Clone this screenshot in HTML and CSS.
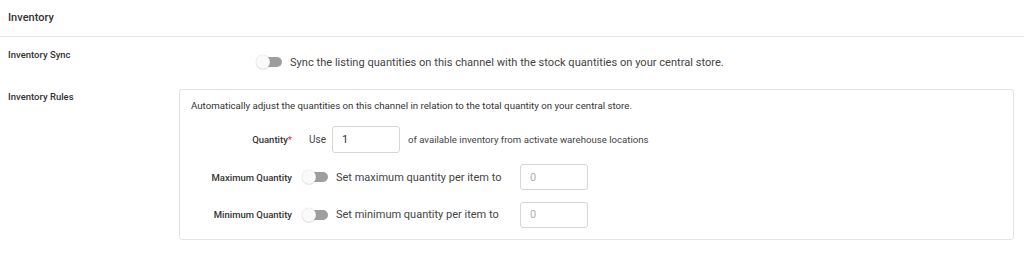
FILE: index.html
```html
<!DOCTYPE html>
<html lang="en">
<head>
  <meta charset="UTF-8">
  <meta name="viewport" content="width=device-width, initial-scale=1.0">
  <title>Inventory</title>
  <link rel="stylesheet" href="styles.css">
</head>
<body>
  <div class="panel">
    <div class="panel-header">Inventory</div>

    <div class="field">
      <div class="field-label">Inventory Sync</div>
      <div class="field-body sync">
        <span class="toggle"><span class="knob"></span></span>
        <span class="sync-text">Sync the listing quantities on this channel with the stock quantities on your central store.</span>
      </div>
    </div>

    <div class="field">
      <div class="field-label">Inventory Rules</div>
      <div class="rules-box">
        <p class="rules-desc">Automatically adjust the quantities on this channel in relation to the total quantity on your central store.</p>
        <div class="rule-row">
          <div class="rule-label">Quantity<span class="req">*</span></div>
          <div class="rule-body">
            <span class="use">Use</span>
            <input class="num-input qty" type="text" value="1">
            <span class="small-text">of available inventory from activate warehouse locations</span>
          </div>
        </div>
        <div class="rule-row">
          <div class="rule-label">Maximum Quantity</div>
          <div class="rule-body">
            <span class="toggle"><span class="knob"></span></span>
            <span class="set-text">Set maximum quantity per item to</span>
            <input class="num-input limit" type="text" placeholder="0">
          </div>
        </div>
        <div class="rule-row">
          <div class="rule-label">Minimum Quantity</div>
          <div class="rule-body">
            <span class="toggle"><span class="knob"></span></span>
            <span class="set-text">Set minimum quantity per item to</span>
            <input class="num-input limit" type="text" placeholder="0">
          </div>
        </div>
      </div>
    </div>
  </div>
</body>
</html>
```

FILE: styles.css
```css
html, body {
  margin: 0;
  padding: 0;
  background: white;
  font-family: Roboto, "Liberation Sans", sans-serif;
  color: #333;
}
.panel {
  width: 1024px;
}
.panel-header {
  height: 36px;
  line-height: 36px;
  padding-left: 8px;
  font-size: 11px;
  font-weight: 500;
  color: #333;
  border-bottom: 1px solid #e6e6e6;
}
.field {
  display: flex;
  padding-top: 11px;
}
.field-label {
  width: 171px;
  padding-left: 8px;
  font-size: 9.5px;
  font-weight: 500;
  color: #333;
  line-height: 14px;
  flex-shrink: 0;
}
.field-body.sync {
  display: flex;
  align-items: center;
  height: 26px;
  margin-top: 1px;
  padding-left: 77px;
  padding-bottom: 4px;
}
.toggle {
  position: relative;
  display: inline-block;
  width: 26px;
  height: 14px;
  flex-shrink: 0;
}
.toggle::before {
  content: "";
  position: absolute;
  left: 3px;
  right: 0;
  top: 2px;
  height: 10px;
  border-radius: 5px;
  background: #9e9e9e;
}
.knob {
  position: absolute;
  left: 0;
  top: 0;
  width: 14px;
  height: 14px;
  border-radius: 50%;
  background: #fafafa;
  box-shadow: 0 0 1px rgba(0, 0, 0, 0.25), 0 1px 1px rgba(0, 0, 0, 0.08);
}
.sync-text {
  margin-left: 8px;
  font-size: 11.1px;
  color: #444;
}
.rules-box {
  width: 835px;
  height: 151px;
  border: 1px solid #e3e3e3;
  border-radius: 3px;
  margin-top: -1px;
  box-sizing: border-box;
  padding: 9px 11px;
}
.rules-desc {
  margin: 0 0 13px;
  font-size: 9.7px;
  line-height: 14px;
  color: #333;
}
.rule-row {
  display: flex;
  align-items: center;
  height: 27px;
  margin-bottom: 10.5px;
}
.rule-label {
  width: 101px;
  text-align: right;
  font-size: 9.5px;
  font-weight: 500;
  color: #333;
  flex-shrink: 0;
}
.req {
  color: #e53935;
}
.rule-body {
  display: flex;
  align-items: center;
  margin-left: 10px;
}
.use {
  font-size: 10px;
  color: #444;
  margin-left: 7px;
  margin-right: 6px;
}
.num-input {
  box-sizing: border-box;
  height: 27px;
  border: 1px solid #d6d6d6;
  border-radius: 3px;
  font-family: inherit;
  font-size: 11px;
  color: #333;
  padding: 0 9px;
  outline: none;
}
.num-input.qty {
  width: 68px;
}
.num-input.limit {
  width: 68px;
  height: 26px;
}
.num-input::placeholder {
  color: #b0b0b0;
}
.small-text {
  margin-left: 8px;
  font-size: 9.65px;
  color: #444;
}
.set-text {
  width: 192px;
  flex-shrink: 0;
  padding-left: 8px;
  box-sizing: border-box;
  font-size: 11px;
  color: #444;
}
```
